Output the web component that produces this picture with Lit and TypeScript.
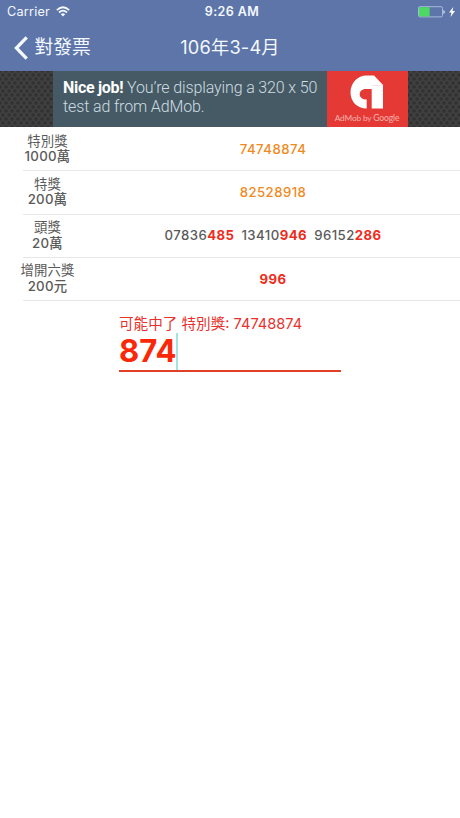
import { LitElement, html, css } from "lit";
import { customElement } from "lit/decorators.js";

interface Prize {
  name: string;
  amount: string;
  tone: string;
  numbers: { head: string; tail: string }[];
}

const prizes: Prize[] = [
  { name: "特別獎", amount: "1000萬", tone: "orange", numbers: [{ head: "74748874", tail: "" }] },
  { name: "特獎", amount: "200萬", tone: "orange", numbers: [{ head: "82528918", tail: "" }] },
  {
    name: "頭獎",
    amount: "20萬",
    tone: "gray",
    numbers: [
      { head: "07836", tail: "485" },
      { head: "13410", tail: "946" },
      { head: "96152", tail: "286" },
    ],
  },
  { name: "增開六獎", amount: "200元", tone: "gray", numbers: [{ head: "", tail: "996" }] },
];

@customElement("status-bar")
class StatusBar extends LitElement {
  static styles = css`
    :host {
      display: grid;
      grid-template-columns: 1fr auto 1fr;
      align-items: center;
      height: 24px;
      padding: 0 5px 0 7px;
      color: #f4f8ff;
      font-size: 12.7px;
      line-height: 24px;
    }
    .left { display: flex; align-items: center; gap: 6px; letter-spacing: 0.2px; }
    .time { font-weight: 600; font-size: 12.5px; letter-spacing: 0.4px; padding-left: 2px; }
    .right { display: flex; align-items: center; justify-content: flex-end; gap: 3px; }
    svg { display: block; }
    .wifi { margin-top: -1px; }
  `;
  render() {
    return html`
      <div class="left">
        <span>Carrier</span>
        <svg class="wifi" width="14" height="11" viewBox="0 0 14 11" fill="none" stroke="#f4f8ff" stroke-width="1.7">
          <path d="M0.8 4.1 Q7 -1.6 13.2 4.1" />
          <path d="M3 6.5 Q7 2.9 11 6.5" />
          <path d="M4.8 8.2 Q7 6.3 9.2 8.2 L7 10.6Z" fill="#f4f8ff" stroke="none" />
        </svg>
      </div>
      <div class="time">9:26 AM</div>
      <div class="right">
        <svg width="28" height="12" viewBox="0 0 28 12">
          <rect x="0.5" y="0.7" width="24" height="10.2" rx="1.4" fill="none" stroke="#a9b9dc" />
          <path d="M1 1.2H11.6v9.2H1z" fill="#4cd964" />
          <path d="M25.5 4c1.6.5 1.6 3.5 0 4z" fill="#f4f8ff" />
        </svg>
        <svg width="6" height="10" viewBox="0 0 6 10">
          <path d="M4.3 0 0 5.6h2.5L1.5 10 6 4H3.5z" fill="#fff" />
        </svg>
      </div>
    `;
  }
}

@customElement("nav-bar")
class NavBar extends LitElement {
  static styles = css`
    :host {
      display: grid;
      grid-template-columns: 1fr auto 1fr;
      align-items: center;
      height: 47px;
      color: #f4f8ff;
      font-size: 18.8px;
      line-height: 47px;
    }
    .back { display: flex; align-items: center; padding-left: 14px; gap: 6.5px; }
    .title { font-size: 18.2px; letter-spacing: 0.2px; }
    svg { display: block; }
  `;
  render() {
    return html`
      <div class="back">
        <svg width="14" height="24" viewBox="0 0 14 24" fill="none" stroke="#f4f8ff" stroke-width="3.3">
          <path d="M12.7 1.4 2.4 12l10.3 10.6" />
        </svg>
        <span>對發票</span>
      </div>
      <div class="title">106年3-4月</div>
      <div></div>
    `;
  }
}

@customElement("ad-banner")
class AdBanner extends LitElement {
  static styles = css`
    :host {
      display: flex;
      justify-content: center;
      height: 56px;
      background-color: #404040;
      background-image: radial-gradient(circle, #323232 0 1.4px, transparent 2.2px),
        radial-gradient(circle, #323232 0 1.4px, transparent 2.2px);
      background-size: 6px 8px;
      background-position: 0 0, 3px 4px;
      font-family: Roboto, sans-serif;
    }
    .copy {
      box-sizing: border-box;
      width: 274px;
      padding: 8px 0 0 10.5px;
      background: #455a64;
      color: #cfdde3;
      font-size: 16px;
      font-weight: 300;
      line-height: 18.7px;
      letter-spacing: -0.13px;
      white-space: nowrap;
    }
    .copy div { height: 18.7px; }
    .copy b { font-weight: 700; color: #fff; letter-spacing: -0.3px; }
    .brand {
      display: flex;
      flex-direction: column;
      align-items: center;
      width: 81px;
      background: #e53935;
      color: #f6b3ae;
      font-family: Lato, sans-serif;
      font-size: 8.3px;
      line-height: 12px;
      white-space: nowrap;
    }
    .brand svg { display: block; margin-top: 4px; }
    .brand .g { font-size: 8.6px; }
    .brand .name { margin-top: 3px; letter-spacing: -0.15px; }
  `;
  render() {
    return html`
      <div class="copy">
        <div class="l1"><b>Nice job!</b> You’re displaying a 320 x 50</div>
        <div class="l2">test ad from AdMob.</div>
      </div>
      <div class="brand">
        <svg width="34" height="34" viewBox="0 0 34 34">
          <path d="M16.7 33.5C7 33.5 .5 26.500 .5 17.500 .5 7.500 8 .5 16.500 .5H24L33 10V33.500H21.700V14H15.800C12 14 9.700 16.500 9.700 19.200c0 3.200 3 5.400 7 5.400z" fill="#fff" />
          <path d="M22 10.500H33L30.500 7.800" fill="none" stroke="#f3d3d2" stroke-width="0.6" />
        </svg>
        <div class="name">AdMob by <span class="g">Google</span></div>
      </div>
    `;
  }
}

@customElement("prize-table")
class PrizeTable extends LitElement {
  static styles = css`
    :host { display: block; }
    .row { display: flex; height: 43.3px; color: #5a5a5a; font-size: 13.3px; }
    .label {
      flex: none;
      width: 95px;
      padding-top: 6.5px;
      box-sizing: border-box;
      text-align: center;
      line-height: 15.5px;
      letter-spacing: 0.1px;
      white-space: nowrap;
    }
    .label div { height: 15.5px; }
    .name { font-size: 13.4px; }
    .amount { font-weight: 500; letter-spacing: 0.25px; }
    .numbers {
      flex: 1;
      display: flex;
      align-items: center;
      justify-content: center;
      gap: 7px;
      padding-right: 9px;
      font-weight: 500;
      font-size: 13.2px;
      letter-spacing: 0.45px;
    }
    .orange { color: #f08a1c; }
    .gray { color: #5a5a5a; }
    .tail { color: #ee2c1c; font-weight: 700; }
    .rule { height: 1px; margin: 0 0 -1px 23px; background: #e7e7e7; }
  `;
  render() {
    return prizes.map(
      (p) => html`
        <div class="row">
          <div class="label">
            <div class="name">${p.name}</div>
            <div class="amount">${p.amount}</div>
          </div>
          <div class="numbers ${p.tone}">
            ${p.numbers.map((n) => html`<span>${n.head}<span class="tail">${n.tail}</span></span>`)}
          </div>
        </div>
        <div class="rule"></div>
      `
    );
  }
}

@customElement("check-field")
class CheckField extends LitElement {
  static styles = css`
    :host { display: block; width: 222px; margin: 16px 0 0 119px; }
    .hint { height: 17px; font-size: 14.6px; line-height: 17px; white-space: nowrap; color: #e8302c; }
    .entry {
      display: flex;
      height: 36.5px;
      border-bottom: 2px solid #e04028;
      color: #fa2808;
      font-size: 31px;
      font-weight: 700;
      line-height: 36px;
    }
    .caret { width: 2px; height: 36.5px; background: #a4e4e0; }
  `;
  render() {
    return html`
      <div class="hint">可能中了 特別獎: 74748874</div>
      <div class="entry"><span class="value">874</span><span class="caret"></span></div>
    `;
  }
}

@customElement("app-root")
class AppRoot extends LitElement {
  static styles = css`
    :host {
      display: block;
      height: 818px;
      overflow: hidden;
      background: #fff;
      font-family: Inter, "Noto Sans CJK TC", sans-serif;
    }
    .header { background: #5d75a9; }
  `;
  render() {
    return html`
      <div class="header">
        <status-bar></status-bar>
        <nav-bar></nav-bar>
      </div>
      <ad-banner></ad-banner>
      <prize-table></prize-table>
      <check-field></check-field>
    `;
  }
}
